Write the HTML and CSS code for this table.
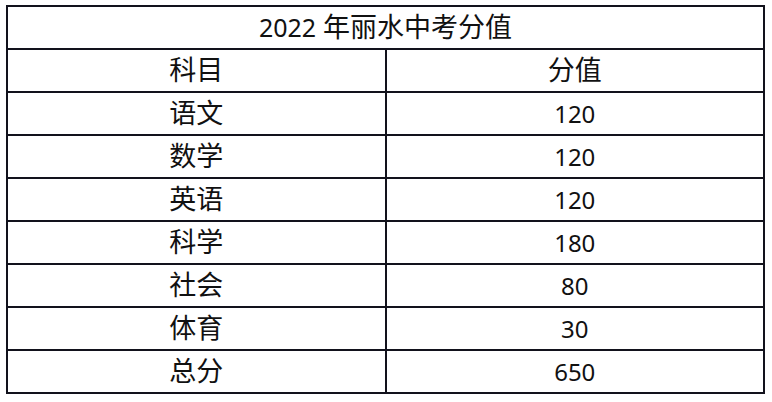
FILE: index.html
```html
<!DOCTYPE html>
<html lang="zh-CN">
<head>
<meta charset="utf-8">
<title>2022 年丽水中考分值</title>
<link rel="stylesheet" href="styles.css">
</head>
<body>
<div class="wrap">
<table class="scores">
  <tr class="title-row"><td colspan="2"><span class="num-t">2022</span> 年丽水中考分值</td></tr>
  <tr><td>科目</td><td>分值</td></tr>
  <tr><td>语文</td><td><span class="num">120</span></td></tr>
  <tr><td>数学</td><td><span class="num">120</span></td></tr>
  <tr><td>英语</td><td><span class="num">120</span></td></tr>
  <tr><td>科学</td><td><span class="num">180</span></td></tr>
  <tr><td>社会</td><td><span class="num">80</span></td></tr>
  <tr><td>体育</td><td><span class="num">30</span></td></tr>
  <tr><td>总分</td><td><span class="num">650</span></td></tr>
</table>
</div>
</body>
</html>
```
FILE: styles.css
```css
html, body {
  margin: 0;
  padding: 0;
  background: #ffffff;
}
.wrap {
  padding: 5px 0 0 6px;
}
.scores {
  border-collapse: collapse;
  table-layout: fixed;
  width: 759px;
  border: 2px solid #12121c;
  font-family: "Noto Sans", "Noto Sans CJK SC", sans-serif;
  font-size: 27px;
  color: #111111;
}
.scores td {
  border: 2px solid #12121c;
  height: 38px;
  padding: 0 0 3px 0;
  text-align: center;
  vertical-align: middle;
  line-height: 1;
  width: 50%;
}
.num {
  font-size: 24px;
}
.num-t {
  font-size: 25px;
}
```
